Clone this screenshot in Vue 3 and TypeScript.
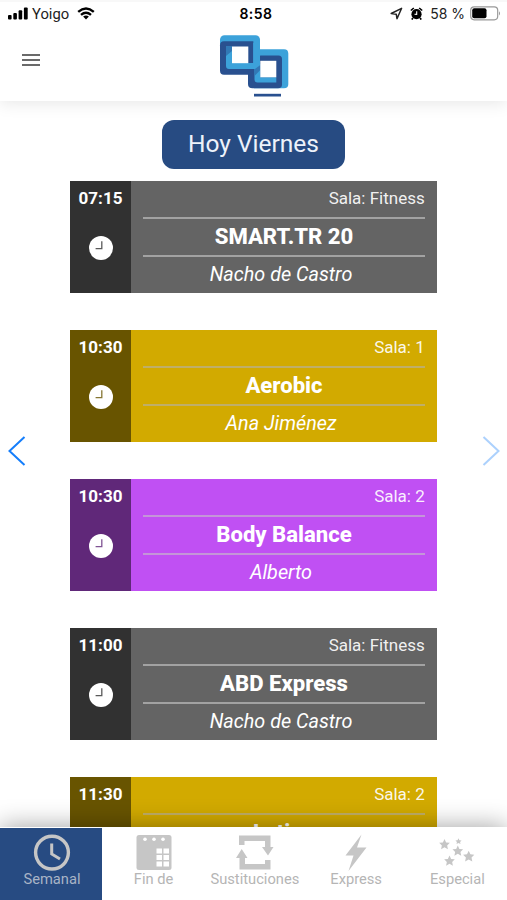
<script setup lang="ts">
interface GymClass {
  time: string
  room: string
  title: string
  coach: string
  tone: 'gray' | 'gold' | 'violet'
}

const classes: GymClass[] = [
  { time: '07:15', room: 'Sala: Fitness', title: 'SMART.TR 20', coach: 'Nacho de Castro', tone: 'gray' },
  { time: '10:30', room: 'Sala: 1', title: 'Aerobic', coach: 'Ana Jiménez', tone: 'gold' },
  { time: '10:30', room: 'Sala: 2', title: 'Body Balance', coach: 'Alberto', tone: 'violet' },
  { time: '11:00', room: 'Sala: Fitness', title: 'ABD Express', coach: 'Nacho de Castro', tone: 'gray' },
  { time: '11:30', room: 'Sala: 2', title: 'Latino', coach: '', tone: 'gold' },
]

const tabs = [
  { label: 'Semanal', icon: 'clock' },
  { label: 'Fin de', icon: 'calendar' },
  { label: 'Sustituciones', icon: 'swap' },
  { label: 'Express', icon: 'bolt' },
  { label: 'Especial', icon: 'stars' },
]

const stars = [
  { x: 9.5, y: 9, s: 0.95 },
  { x: 23.5, y: 6, s: 0.55 },
  { x: 22.8, y: 15.5, s: 0.95 },
  { x: 33.7, y: 21, s: 1 },
  { x: 14.5, y: 25.5, s: 0.95 },
]
</script>

<template>
  <div class="screen">
    <header class="top">
      <div class="status">
        <div class="side">
          <svg class="signal" width="20" height="13" viewBox="0 0 20 13">
            <rect x="0" y="8" width="3.6" height="4.5" rx="1" />
            <rect x="5.3" y="6" width="3.6" height="6.5" rx="1" />
            <rect x="10.6" y="3.3" width="3.6" height="9.2" rx="1" />
            <rect x="15.9" y="0.5" width="3.8" height="12" rx="1" />
          </svg>
          <span class="carrier">Yoigo</span>
          <svg class="wifi" width="18" height="13" viewBox="0 0 18 13">
            <path d="M1.2 4.8Q9-1.9 16.8 4.8M4 7.9Q9 3.7 14 7.9" fill="none" stroke="#000" stroke-width="2.4" />
            <path d="M6.1 9.5Q9 7.3 11.9 9.5L9 12.6z" />
          </svg>
        </div>
        <span class="clock">8:58</span>
        <div class="side right">
          <svg width="13" height="13" viewBox="0 0 13 13">
            <path d="M1.2 6.5L11.6 1.3L7 11.7L6.3 7.3z" fill="none" stroke="#222" stroke-width="1.5" stroke-linejoin="round" />
          </svg>
          <svg class="alarm" width="13" height="13" viewBox="0 0 13 13">
            <circle cx="6.5" cy="7.2" r="5.1" />
            <path d="M.8 3.5L3.8 1M12.2 3.5L9.2 1M3 11L1.7 12.6M10 11L11.3 12.6" stroke="#000" stroke-width="1.6" />
            <path d="M6.7 4.3V7.4L4.5 7.2" fill="none" stroke="#fff" stroke-width="1.1" />
          </svg>
          <span class="percent">58 %</span>
          <svg class="battery" width="31" height="15" viewBox="0 0 31 15">
            <rect x=".7" y=".8" width="27" height="13" rx="3.5" fill="#fff" stroke="#999" stroke-width="1.2" />
            <rect x="2.2" y="2.3" width="14.3" height="10" rx="2" />
            <path d="M29 5.2Q31 7.3 29 9.4z" fill="#999" />
          </svg>
        </div>
      </div>
      <div class="bar">
        <button class="menu" aria-label="Menú"><i></i><i></i><i></i></button>
        <svg class="logo" width="70" height="64" viewBox="0 0 70 64">
          <rect x="1" y="1.2" width="40" height="33.5" rx="4.5" fill="#3ca2da" />
          <path d="M35 15.2H65Q69.3 15.2 69.3 19.5V50Q69.3 54.3 65 54.3H35z" fill="#3ca2da" />
          <path d="M5 7.2H34.3V40.7H5Q1 40.7 1 36.7V11.2Q1 7.2 5 7.2z" fill="#29508f" />
          <path d="M29 34.7H36.5V26Q38 21.5 42 21.5H59.5Q63 21.5 63 25V50.5Q63 54.3 59 54.3H33.5Q29 54.3 29 50z" fill="#29508f" />
          <path d="M7 12.5H13V29H34.3V9H41V31Q41 35 37 35H10Q7 35 7 32z" fill="#3ca2da" />
          <path d="M35.5 30H41.5V43.3H57.3V48.5H38.5Q35.5 48.5 35.5 45.5z" fill="#3ca2da" />
          <path d="M36 35L41.3 31V36L35.5 42z" fill="#3278b5" />
          <path d="M7 12.5H13V17L7 22z" fill="#3278b5" />
          <rect x="13" y="12.5" width="16.3" height="16.7" fill="#fff" />
          <rect x="41.3" y="26.8" width="16" height="16.5" fill="#fff" />
          <rect x="35" y="59.8" width="27" height="2.7" fill="#29508f" />
        </svg>
      </div>
    </header>

    <main class="schedule">
      <h1 class="day">Hoy Viernes</h1>
      <article v-for="(c, n) in classes" :key="n" class="card" :class="c.tone">
        <div class="when">
          <span>{{ c.time }}</span>
          <svg width="24" height="24" viewBox="0 0 24 24">
            <circle cx="12" cy="12" r="12" fill="#fff" />
            <path d="M12.8 5.2V12.6H6.6" fill="none" class="hands" stroke-width="1.3" />
          </svg>
        </div>
        <div class="info">
          <div class="room">{{ c.room }}</div>
          <h2><span>{{ c.title }}</span></h2>
          <div class="coach">{{ c.coach }}</div>
        </div>
      </article>
    </main>

    <button class="arrow prev" aria-label="Anterior">
      <svg width="18" height="30" viewBox="0 0 18 30"><path d="M16.5 1L1.5 15L16.5 29" /></svg>
    </button>
    <button class="arrow next" aria-label="Siguiente">
      <svg width="18" height="30" viewBox="0 0 18 30"><path d="M1.5 1L16.5 15L1.5 29" /></svg>
    </button>

    <nav class="tabs">
      <a v-for="(t, n) in tabs" :key="t.label" class="tab" :class="{ active: n === 0 }">
        <svg width="38" height="38" viewBox="0 0 38 38">
          <g v-if="t.icon === 'clock'" fill="none" stroke="currentColor">
            <circle cx="19" cy="18.6" r="16.4" stroke-width="3.4" />
            <path d="M18.7 9.5V20L27 25" stroke-width="3" />
          </g>
          <g v-else-if="t.icon === 'calendar'">
            <rect x="1.5" y="1" width="35" height="35" rx="2.5" fill="currentColor" />
            <g fill="#fff">
              <circle cx="10" cy="5.2" r="1.8" />
              <circle cx="19" cy="5.2" r="1.8" />
              <circle cx="28" cy="5.2" r="1.8" />
              <path d="M21.5 14.5h5.5v5h-5.5zM28.5 14.5h5.5v5h-5.5zM21.5 21h5.5v5h-5.5zM28.5 21h5.5v5h-5.5zM21.5 27.5h5.5v5h-5.5zM28.5 27.5h5.5v5h-5.5z" />
            </g>
          </g>
          <path
            v-else-if="t.icon === 'swap'"
            fill="currentColor"
            d="M3 1.5H34.5V13H37.5L32 21.5L26 13H29V7H8.5V11H3zM34.5 35.5H3.5V24H0L5.7 15L11.5 24H9V30H29V26H34.5z"
          />
          <path v-else-if="t.icon === 'bolt'" fill="currentColor" d="M24.5 .5L8.5 21.5H16.5L11.5 37L29.5 13.5H20z" />
          <g v-else fill="currentColor">
            <path
              v-for="(s, k) in stars"
              :key="k"
              :transform="`translate(${s.x - 3} ${s.y + 1.2}) scale(${s.s})`"
              d="M0-5.5L1.7-1.9L5.6-1.5L2.8 1.3L3.6 5.2L0 3.3L-3.6 5.2L-2.8 1.3L-5.6-1.5L-1.7-1.9z"
            />
          </g>
        </svg>
        <span>{{ t.label }}</span>
      </a>
    </nav>
  </div>
</template>

<style>
body {
  margin: 0;
  background: #fff;
}
</style>

<style scoped>
.screen {
  position: relative;
  display: flex;
  flex-direction: column;
  height: 900px;
  overflow: hidden;
  background: #fff;
  font-family: Roboto, sans-serif;
}
.top {
  position: relative;
  height: 101px;
  flex: none;
  box-sizing: border-box;
  border-top: 2px solid #f8f8f8;
  background: #fff;
  box-shadow: 0 2px 16px rgba(0, 0, 0, 0.1);
}
.status {
  display: grid;
  grid-template-columns: 1fr auto 1fr;
  align-items: center;
  height: 24px;
  padding: 0 7px 0 8px;
  font-family: Inter, sans-serif;
  font-size: 14px;
  color: #222;
}
.side {
  display: flex;
  align-items: center;
}
.signal,
.wifi {
  margin-top: -2px;
}
.right {
  justify-content: flex-end;
  margin-right: -1px;
}
.right svg {
  margin-top: -1px;
}
.carrier {
  margin: 0 8px 0 4px;
  font-family: Roboto, sans-serif;
  font-size: 14.8px;
}
.clock {
  margin: -1px 0 0 4px;
  font-size: 14px;
  font-weight: 600;
  letter-spacing: 0.5px;
  color: #000;
}
.right .alarm {
  margin-left: 7px;
}
.percent {
  margin: -1px 5px 0 7px;
  font-size: 14px;
}
.bar {
  display: grid;
  grid-template-columns: 1fr auto 1fr;
  align-items: center;
  padding: 8px 0 0 22px;
}
.menu {
  display: flex;
  flex-direction: column;
  gap: 3px;
  width: 18px;
  padding: 0;
  margin-top: -12px;
  border: 0;
  background: none;
}
.menu i {
  height: 2px;
  background: #6a6a6a;
}
.logo {
  margin-left: -21px;
}
.schedule {
  flex: 1;
  min-height: 0;
  overflow: hidden;
  display: flex;
  flex-direction: column;
  align-items: center;
  padding-top: 18.5px;
}
.day {
  flex: none;
  width: 183.5px;
  height: 49px;
  margin: 0 0 12px;
  border-radius: 12px;
  background: #274b82;
  color: #edf2fa;
  font-size: 24.5px;
  font-weight: 400;
  line-height: 48px;
  text-align: center;
}
.card {
  flex: none;
  display: flex;
  width: 367.5px;
  height: 112.5px;
  margin-bottom: 36.5px;
  color: #fff;
  background: var(--tone);
}
.gray {
  --tone: #646464;
  --dark: #313131;
  --line: #a2a2a2;
}
.gold {
  --tone: #d2aa00;
  --dark: #685400;
  --line: #bfae68;
}
.violet {
  --tone: #c050f3;
  --dark: #602879;
  --line: #c495d8;
}
.when {
  display: flex;
  flex-direction: column;
  align-items: center;
  gap: 28px;
  width: 61.5px;
  padding-top: 7px;
  box-sizing: border-box;
  background: var(--dark);
  font-size: 17px;
  font-weight: 700;
  line-height: 20px;
}
.hands {
  stroke: var(--dark);
  stroke-opacity: 0.8;
}
.info {
  flex: 1;
  padding: 0 12.5px 0 12px;
  text-align: center;
}
.room {
  height: 36px;
  font-size: 17px;
  line-height: 34px;
  text-align: right;
  color: rgba(255, 255, 255, 0.93);
}
h2 {
  height: 36px;
  margin: 0;
  border-top: 2px solid var(--line);
  border-bottom: 2px solid var(--line);
  font-size: 22.1px;
  font-weight: 800;
  line-height: 35px;
}
.coach {
  padding-right: 6px;
  font-size: 19.8px;
  font-style: italic;
  line-height: 36px;
}
.arrow {
  position: absolute;
  top: 436px;
  width: 18px;
  height: 30px;
  padding: 0;
  border: 0;
  background: none;
}
.arrow svg {
  display: block;
}
.arrow path {
  fill: none;
  stroke: #157efb;
  stroke-width: 2;
}
.prev {
  left: 8px;
}
.next {
  right: 7px;
  opacity: 0.35;
}
.tabs {
  position: relative;
  flex: none;
  display: grid;
  grid-template-columns: 102px repeat(4, minmax(0, 1fr));
  height: 73px;
  background: #fff;
  box-shadow: 0 0 26px rgba(0, 0, 0, 0.38);
}
.tab {
  display: flex;
  flex-direction: column;
  align-items: center;
  padding: 7px 0 0 2px;
  color: #c6c6c6;
  font-size: 14.7px;
  line-height: 14px;
}
.tab span {
  color: #b5b5b5;
}
.tab.active {
  margin-top: 1px;
  padding: 6px 0 0 2px;
  box-sizing: border-box;
  background: #274b82;
}
.tab.active span {
  color: #a9b4c6;
}
</style>
